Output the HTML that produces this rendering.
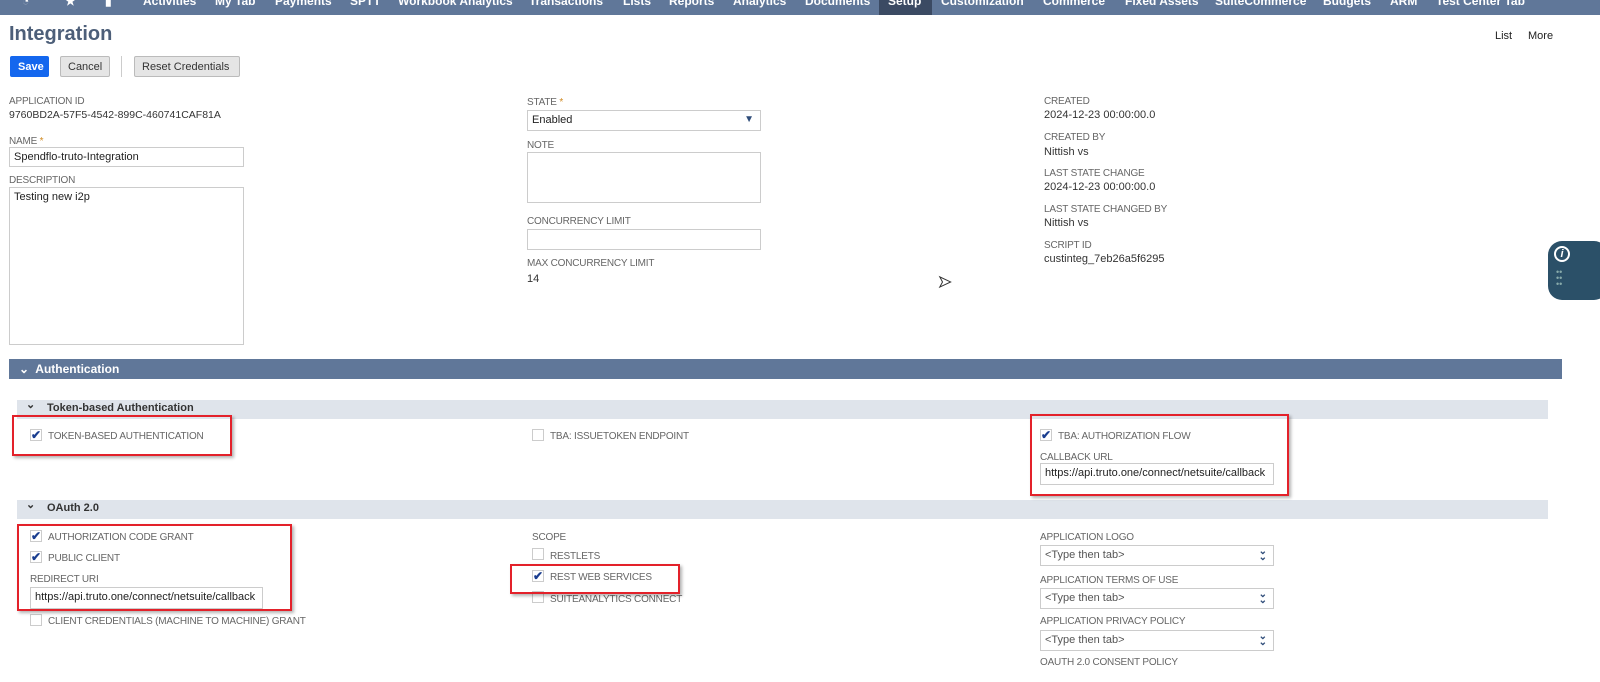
<!DOCTYPE html><html><head><style>
*{margin:0;padding:0;box-sizing:border-box}
body{width:1600px;height:682px;overflow:hidden;background:#fff;font-family:"Liberation Sans",sans-serif;position:relative;color:#333}
.a{position:absolute;white-space:nowrap}
.nav{left:0;top:0;width:1600px;height:15px;background:#607799}
.nav span{position:absolute;top:-6px;color:#fff;font-size:12px;font-weight:bold}
.l{font-size:10px;color:#666;letter-spacing:-.2px}
.v{font-size:11px;color:#333}
.in{border:1px solid #ccc;background:#fff;font-size:11px;padding:3px 4px;color:#222;overflow:hidden}
.cb{width:12px;height:12px;border:1px solid #ccc;background:#fff}
.ck{color:#1a3d8f;font-size:12px;line-height:10px;font-weight:bold}
.red{border:2px solid #e3212a;box-shadow:2px 2px 3px rgba(0,0,0,.3)}
.sub{background:#dfe4eb;height:19px;font-size:11px;font-weight:bold;color:#333;padding:2px 0 0 30px}
.btn{height:21px;border:1px solid #bbb;background:#e5e5e5;border-radius:2px;font-size:11px;padding:4px 7px;color:#333}
.dd{position:absolute;right:6px;top:3px;color:#2f4d7a;font-size:10px;font-weight:bold;line-height:6px}
</style></head><body>
<div class="a nav">
<span style="left:22px">◔</span><span style="left:65px">★</span><span style="left:105px">▮</span>
<span style="left:143px">Activities</span><span style="left:215px">My Tab</span><span style="left:275px">Payments</span><span style="left:350px">SPTT</span><span style="left:398px">Workbook Analytics</span><span style="left:529px">Transactions</span><span style="left:623px">Lists</span><span style="left:669px">Reports</span><span style="left:733px">Analytics</span><span style="left:805px">Documents</span>
<div style="position:absolute;left:879px;top:0;width:53px;height:15px;background:#3b4a63"></div><span style="left:888px">Setup</span>
<span style="left:941px">Customization</span><span style="left:1043px">Commerce</span><span style="left:1125px">Fixed Assets</span><span style="left:1215px">SuiteCommerce</span><span style="left:1323px">Budgets</span><span style="left:1390px">ARM</span><span style="left:1436px">Test Center Tab</span>
</div>
<div class="a" style="left:9px;top:23px;font-size:20px;font-weight:bold;color:#4d5f79">Integration</div>
<div class="a v" style="left:1495px;top:30px;color:#222">List</div><div class="a v" style="left:1528px;top:30px;color:#222">More</div>
<div class="a btn" style="left:10px;top:56px;width:39px;background:#1467ee;border-color:#1467ee;color:#fff;font-weight:bold">Save</div>
<div class="a btn" style="left:60px;top:56px;width:50px">Cancel</div>
<div class="a" style="left:121px;top:56px;width:1px;height:21px;background:#ccc"></div>
<div class="a btn" style="left:134px;top:56px;width:106px">Reset Credentials</div>

<div class="a l" style="left:9px;top:96px">APPLICATION ID</div>
<div class="a v" style="left:9px;top:109px;font-size:10.5px">9760BD2A-57F5-4542-899C-460741CAF81A</div>
<div class="a l" style="left:9px;top:136px">NAME <span style="color:#d08a22">*</span></div>
<div class="a in" style="left:9px;top:147px;width:235px;height:20px">Spendflo-truto-Integration</div>
<div class="a l" style="left:9px;top:175px">DESCRIPTION</div>
<div class="a in" style="left:9px;top:187px;width:235px;height:158px">Testing new i2p</div>

<div class="a l" style="left:527px;top:97px">STATE <span style="color:#d08a22">*</span></div>
<div class="a in" style="left:527px;top:110px;width:234px;height:21px">Enabled<span style="position:absolute;right:6px;top:3px;color:#2f4d7a;font-size:10px">▼</span></div>
<div class="a l" style="left:527px;top:140px">NOTE</div>
<div class="a in" style="left:527px;top:152px;width:234px;height:51px"></div>
<div class="a l" style="left:527px;top:216px">CONCURRENCY LIMIT</div>
<div class="a in" style="left:527px;top:229px;width:234px;height:21px"></div>
<div class="a l" style="left:527px;top:258px">MAX CONCURRENCY LIMIT</div>
<div class="a v" style="left:527px;top:273px">14</div>

<div class="a l" style="left:1044px;top:96px">CREATED</div><div class="a v" style="left:1044px;top:109px">2024-12-23 00:00:00.0</div>
<div class="a l" style="left:1044px;top:132px">CREATED BY</div><div class="a v" style="left:1044px;top:146px">Nittish vs</div>
<div class="a l" style="left:1044px;top:168px">LAST STATE CHANGE</div><div class="a v" style="left:1044px;top:181px">2024-12-23 00:00:00.0</div>
<div class="a l" style="left:1044px;top:204px">LAST STATE CHANGED BY</div><div class="a v" style="left:1044px;top:217px">Nittish vs</div>
<div class="a l" style="left:1044px;top:240px">SCRIPT ID</div><div class="a v" style="left:1044px;top:253px">custinteg_7eb26a5f6295</div>
<div class="a" style="left:938px;top:272px;font-size:16px;color:#fff;-webkit-text-stroke:1px #333">➤</div>

<div class="a" style="left:1548px;top:241px;width:60px;height:59px;background:#2b5068;border-radius:14px"><div style="position:absolute;left:6px;top:5px;width:16px;height:16px;border:2px solid #fff;border-radius:50%;color:#fff;font-size:11px;font-style:italic;font-weight:bold;text-align:center;line-height:12px">i</div><div style="position:absolute;left:8px;top:28px;color:#8aa;font-size:9px;line-height:6px">••<br>••<br>••</div></div>

<div class="a" style="left:9px;top:359px;width:1553px;height:20px;background:#607799;color:#fff;font-size:12px;font-weight:bold;padding:3px 0 0 10px">⌄&nbsp; Authentication</div>

<div class="a sub" style="left:17px;top:400px;width:1531px">Token-based Authentication</div>
<div class="a" style="left:26px;top:398px;font-size:11px;font-weight:bold">⌄</div>
<div class="a cb" style="left:30px;top:429px"></div><div class="a ck" style="left:31px;top:430px">✔</div><div class="a l" style="left:48px;top:431px">TOKEN-BASED AUTHENTICATION</div>
<div class="a cb" style="left:532px;top:429px"></div><div class="a l" style="left:550px;top:431px">TBA: ISSUETOKEN ENDPOINT</div>
<div class="a cb" style="left:1040px;top:429px"></div><div class="a ck" style="left:1041px;top:430px">✔</div><div class="a l" style="left:1058px;top:431px">TBA: AUTHORIZATION FLOW</div>
<div class="a l" style="left:1040px;top:452px">CALLBACK URL</div>
<div class="a in" style="left:1040px;top:463px;width:234px;height:22px">https://api.truto.one/connect/netsuite/callback</div>

<div class="a sub" style="left:17px;top:500px;width:1531px">OAuth 2.0</div>
<div class="a" style="left:26px;top:498px;font-size:11px;font-weight:bold">⌄</div>
<div class="a cb" style="left:30px;top:530px"></div><div class="a ck" style="left:31px;top:531px">✔</div><div class="a l" style="left:48px;top:532px">AUTHORIZATION CODE GRANT</div>
<div class="a cb" style="left:30px;top:551px"></div><div class="a ck" style="left:31px;top:552px">✔</div><div class="a l" style="left:48px;top:553px">PUBLIC CLIENT</div>
<div class="a l" style="left:30px;top:574px">REDIRECT URI</div>
<div class="a in" style="left:30px;top:587px;width:233px;height:22px">https://api.truto.one/connect/netsuite/callback</div>
<div class="a cb" style="left:30px;top:614px"></div><div class="a l" style="left:48px;top:616px">CLIENT CREDENTIALS (MACHINE TO MACHINE) GRANT</div>

<div class="a l" style="left:532px;top:532px">SCOPE</div>
<div class="a cb" style="left:532px;top:548px"></div><div class="a l" style="left:550px;top:551px">RESTLETS</div>
<div class="a cb" style="left:532px;top:570px"></div><div class="a ck" style="left:533px;top:571px">✔</div><div class="a l" style="left:550px;top:572px">REST WEB SERVICES</div>
<div class="a cb" style="left:532px;top:591px"></div><div class="a l" style="left:550px;top:594px">SUITEANALYTICS CONNECT</div>

<div class="a l" style="left:1040px;top:532px">APPLICATION LOGO</div>
<div class="a in" style="left:1040px;top:545px;width:234px;height:21px;color:#555">&lt;Type then tab&gt;<span class="dd">⌄<br>⌄</span></div>
<div class="a l" style="left:1040px;top:575px">APPLICATION TERMS OF USE</div>
<div class="a in" style="left:1040px;top:588px;width:234px;height:21px;color:#555">&lt;Type then tab&gt;<span class="dd">⌄<br>⌄</span></div>
<div class="a l" style="left:1040px;top:616px">APPLICATION PRIVACY POLICY</div>
<div class="a in" style="left:1040px;top:630px;width:234px;height:21px;color:#555">&lt;Type then tab&gt;<span class="dd">⌄<br>⌄</span></div>
<div class="a l" style="left:1040px;top:657px">OAUTH 2.0 CONSENT POLICY</div>

<div class="a red" style="left:12px;top:415px;width:220px;height:41px"></div>
<div class="a red" style="left:1030px;top:414px;width:259px;height:82px"></div>
<div class="a red" style="left:17px;top:524px;width:275px;height:87px"></div>
<div class="a red" style="left:510px;top:564px;width:170px;height:30px"></div>
</body></html>
